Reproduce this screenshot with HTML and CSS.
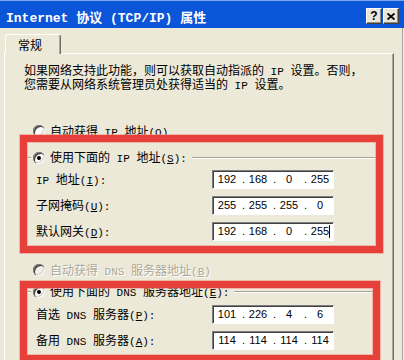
FILE: index.html
```html
<!DOCTYPE html>
<html>
<head>
<meta charset="utf-8">
<title>Internet 协议 (TCP/IP) 属性</title>
<link rel="stylesheet" href="styles.css">
</head>
<body>
<div class="window">
	<div class="titlebar">
		<span class="title">Internet 协议 (TCP/IP) 属性</span>
		<span class="tbtn help">?</span>
		<span class="tbtn close"><svg width="8" height="7" viewBox="0 0 8 7"><path d="M0.5 0.5 L7.5 6.5 M7.5 0.5 L0.5 6.5" stroke="#000" stroke-width="1.8" fill="none"/></svg></span>
	</div>

	<div class="tabs"><div class="tab">常规</div></div>

	<div class="panel">
		<div class="intro">
			<div>如果网络支持此功能，则可以获取自动指派的<span class="lat"> IP </span>设置。否则，</div>
			<div>您需要从网络系统管理员处获得适当的<span class="lat"> IP </span>设置。</div>
		</div>

		<div class="option top"><span class="radio"></span><span>自动获得<span class="lat"> IP </span>地址<span class="lat">(<u>O</u>)</span></span></div>

		<fieldset class="group g1">
			<legend><span class="radio on"></span>使用下面的<span class="lat"> IP </span>地址<span class="lat">(<u>S</u>):</span></legend>
			<div class="row">
				<span class="lbl"><span class="lat">IP </span>地址<span class="lat">(<u>I</u>):</span></span>
				<div class="ipbox"><span class="seg">192</span><span class="dot">.</span><span class="seg">168</span><span class="dot">.</span><span class="seg">0</span><span class="dot">.</span><span class="seg">255</span></div>
			</div>
			<div class="row">
				<span class="lbl">子网掩码<span class="lat">(<u>U</u>):</span></span>
				<div class="ipbox"><span class="seg">255</span><span class="dot">.</span><span class="seg">255</span><span class="dot">.</span><span class="seg">255</span><span class="dot">.</span><span class="seg">0</span></div>
			</div>
			<div class="row">
				<span class="lbl">默认网关<span class="lat">(<u>D</u>):</span></span>
				<div class="ipbox"><span class="seg">192</span><span class="dot">.</span><span class="seg">168</span><span class="dot">.</span><span class="seg">0</span><span class="dot">.</span><span class="seg">255<span class="caret"></span></span></div>
			</div>
		</fieldset>

		<div class="option off"><span class="radio"></span><span>自动获得<span class="lat"> DNS </span>服务器地址<span class="lat">(<u>B</u>)</span></span></div>

		<fieldset class="group g2">
			<legend><span class="radio on"></span>使用下面的<span class="lat"> DNS </span>服务器地址<span class="lat">(<u>E</u>):</span></legend>
			<div class="row">
				<span class="lbl">首选<span class="lat"> DNS </span>服务器<span class="lat">(<u>P</u>):</span></span>
				<div class="ipbox"><span class="seg">101</span><span class="dot">.</span><span class="seg">226</span><span class="dot">.</span><span class="seg">4</span><span class="dot">.</span><span class="seg">6</span></div>
			</div>
			<div class="row">
				<span class="lbl">备用<span class="lat"> DNS </span>服务器<span class="lat">(<u>A</u>):</span></span>
				<div class="ipbox"><span class="seg">114</span><span class="dot">.</span><span class="seg">114</span><span class="dot">.</span><span class="seg">114</span><span class="dot">.</span><span class="seg">114</span></div>
			</div>
		</fieldset>
	</div>

	<div class="mark m1"></div>
	<div class="mark m2"></div>
</div>
</body>
</html>
```

FILE: styles.css
```css
* {
	box-sizing: border-box;
}

body {
	margin: 0;
	width: 404px;
	height: 360px;
	overflow: hidden;
	background: #ECE9D8;
	box-shadow: inset -1px 0 0 #F4F3EE, inset -2px 0 0 #A3A195;
	color: #000;
	font-family: "Noto Sans CJK SC", sans-serif;
	font-size: 12px;
}

.window {
	position: relative;
	width: 404px;
	height: 360px;
}

.lat {
	font-family: "Liberation Mono", "Noto Sans CJK SC", monospace;
	font-size: 11px;
	line-height: 0;
}

/* title bar */
.titlebar {
	display: flex;
	align-items: center;
	height: 28px;
	padding: 3px 5px 0 6px;
	border-top: 1px solid #7FA6EC;
	background: #0A55D8;
	color: #fff;
}

.title {
	font-family: "Liberation Mono", "Noto Sans CJK SC", monospace;
	font-size: 13px;
	font-weight: bold;
	white-space: pre;
}

.tbtn {
	display: flex;
	align-items: center;
	justify-content: center;
	width: 16px;
	height: 16px;
	background: #E8E5D9;
	border: 1px solid;
	border-color: #fff #404040 #404040 #fff;
	box-shadow: inset -1px -1px 0 #8E8C80;
	color: #000;
	font-family: "Liberation Sans", sans-serif;
	font-size: 12px;
	font-weight: bold;
}

.help {
	margin-left: auto;
}

.close {
	margin-left: 1px;
}

/* tab */
.tabs {
	display: flex;
	height: 25px;
	padding: 6px 0 0 5px;
}

.tab {
	position: relative;
	z-index: 1;
	width: 56px;
	height: 20px;
	padding: 3px 0 0 12px;
	border: 1px solid;
	border-color: #fff #716F64 transparent #fff;
	border-bottom: none;
	border-radius: 3px 3px 0 0;
	box-shadow: inset -1px 0 0 #ACA899;
	background: #ECE9D8;
	line-height: 14px;
}

.panel {
	width: 390px;
	height: 320px;
	margin-left: 4px;
	padding: 10px 18px 0 19px;
	border: 1px solid;
	border-color: #fff #716F64 #716F64 #fff;
	box-shadow: inset -1px 0 0 #ACA899;
}

.intro div {
	height: 12px;
	line-height: 12px;
	white-space: nowrap;
}

.intro div + div {
	margin-top: 2px;
}

/* radios */
.option {
	display: flex;
	align-items: center;
	height: 14px;
	margin-left: 9px;
	line-height: 14px;
}

.option.top {
	margin-top: 34px;
}

.option.off {
	margin-top: 14px;
	color: #ACA899;
	text-shadow: 1px 1px 0 #fff;
}

.radio {
	position: relative;
	display: inline-block;
	flex: none;
	width: 12px;
	height: 12px;
	margin-right: 5px;
	border-radius: 50%;
	background: #fff;
	box-shadow: inset 1px 1px 0 #808080, inset 2px 2px 0 #404040, inset -1px -1px 0 #fff, inset -2px -2px 0 #D4D0C8;
	vertical-align: -2px;
}

.off .radio {
	background: #F1EFE6;
}

.radio.on::after {
	content: "";
	position: absolute;
	left: 4px;
	top: 4px;
	width: 4px;
	height: 4px;
	border-radius: 50%;
	background: #000;
}

/* group boxes */
.group {
	width: 354px;
	min-width: 0;
	margin: 0;
	border: 1px solid #A5A394;
	border-radius: 3px;
	box-shadow: inset 0 1px 0 #fff;
}

.g1 {
	margin-top: 12px;
	padding: 2px 0 4px;
}

.g2 {
	margin-top: 7px;
	padding: 3px 0 4px;
}

legend {
	height: 14px;
	margin-left: 6px;
	padding: 0 5px 0 2px;
	background: #ECE9D8;
	line-height: 14px;
}

.row {
	display: flex;
	align-items: center;
	height: 26px;
	padding-left: 11px;
	line-height: 14px;
}

.lbl {
	width: 176px;
	flex: none;
}

.ipbox {
	display: flex;
	align-items: center;
	width: 122px;
	height: 19px;
	padding-left: 1px;
	border: 1px solid;
	border-color: #7F7F7F #fff #fff #7F7F7F;
	box-shadow: inset 1px 1px 0 #404040;
	background: #fff;
	font-family: "Liberation Sans", sans-serif;
	font-size: 11px;
}

.seg {
	width: 26px;
	text-align: center;
}

.dot {
	width: 5px;
	text-align: right;
}

.caret {
	display: inline-block;
	width: 1px;
	height: 13px;
	margin-right: -1px;
	background: #000;
	vertical-align: middle;
}

/* red annotation frames over the dialog */
.mark {
	position: absolute;
	border: 7px solid #E7403B;
	box-shadow: 0 0 0 1px rgba(240, 150, 140, 0.6), inset 0 0 0 1px rgba(240, 150, 140, 0.6);
}

.m1 {
	left: 20px;
	top: 135px;
	width: 363px;
	height: 118px;
}

.m2 {
	left: 20px;
	top: 281px;
	width: 360px;
	height: 81px;
}
```
